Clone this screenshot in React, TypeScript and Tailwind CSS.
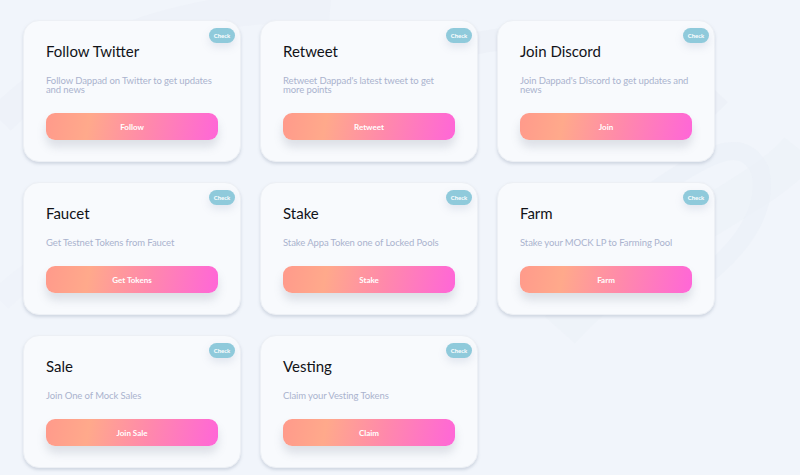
import React from "react";

interface Task {
  title: string;
  description: string;
  action: string;
}

const tasks: Task[] = [
  { title: "Follow Twitter", description: "Follow Dappad on Twitter to get updates and news", action: "Follow" },
  { title: "Retweet", description: "Retweet Dappad's latest tweet to get more points", action: "Retweet" },
  { title: "Join Discord", description: "Join Dappad's Discord to get updates and news", action: "Join" },
  { title: "Faucet", description: "Get Testnet Tokens from Faucet", action: "Get Tokens" },
  { title: "Stake", description: "Stake Appa Token one of Locked Pools", action: "Stake" },
  { title: "Farm", description: "Stake your MOCK LP to Farming Pool", action: "Farm" },
  { title: "Sale", description: "Join One of Mock Sales", action: "Join Sale" },
  { title: "Vesting", description: "Claim your Vesting Tokens", action: "Claim" },
];

function Backdrop() {
  // faint swooshes behind the cards
  return (
    <svg className="pointer-events-none absolute inset-0 h-full w-full" viewBox="0 0 800 475" fill="none">
      <path d="M0 120 C 80 40, 200 0, 330 10" stroke="#ebf0f8" strokeWidth="30" opacity="0.5" />
      <path d="M420 60 C 520 20, 640 30, 720 110" stroke="#e9eef6" strokeWidth="22" opacity="0.5" />
      <path d="M560 330 C 640 240, 760 200, 800 150" stroke="#ecf1f8" strokeWidth="40" opacity="0.5" />
      <path d="M640 200 C 700 160, 740 130, 760 170 C 770 210, 740 250, 700 280" stroke="#eaeff7" strokeWidth="18" opacity="0.5" />
      <path d="M0 300 C 40 260, 90 240, 140 250" stroke="#eef2f9" strokeWidth="24" opacity="0.5" />
    </svg>
  );
}

function TaskCard({ task }: { task: Task }) {
  return (
    <div className="relative rounded-[16px] border border-[#edf0f5] bg-[#f8fafd] px-[22px] pb-[21px] pt-[20px] shadow-[0_2px_3px_rgba(150,160,180,0.35)]">
      <span className="absolute right-[5px] top-[7px] flex h-[15px] w-[26px] items-center justify-center rounded-full bg-[#8fcadb] text-[6px] font-bold text-white shadow-[0_4px_8px_rgba(120,140,170,0.18)]">
        Check
      </span>
      <h3 className="text-[15px] leading-[20px] text-[#111318]">{task.title}</h3>
      <p className="mt-[15px] text-[9.5px] leading-[9px] tracking-[-0.1px] text-[#aab3ce]">{task.description}</p>
      <button
        type="button"
        className="mt-[19px] flex h-[27px] w-full items-center justify-center rounded-[9px] bg-[linear-gradient(100deg,#ff9a8b_0%,#ffa98b_25%,#ff88ac_60%,#ff66d8_100%)] text-[8px] font-bold text-white shadow-[0_7px_10px_rgba(110,120,140,0.2)]"
      >
        {task.action}
      </button>
    </div>
  );
}

export default function App() {
  return (
    <div className="relative h-[475px] w-[800px] overflow-hidden bg-[#f1f5fb]" style={{ fontFamily: "Lato, 'Noto Sans', sans-serif" }}>
      <Backdrop />
      <div className="relative grid w-[730px] grid-cols-[218px_218px_218px] gap-x-[19px] gap-y-[20px] pl-[23px] pt-[20px]">
        {tasks.map((t) => (
          <TaskCard key={t.title} task={t} />
        ))}
      </div>
    </div>
  );
}
